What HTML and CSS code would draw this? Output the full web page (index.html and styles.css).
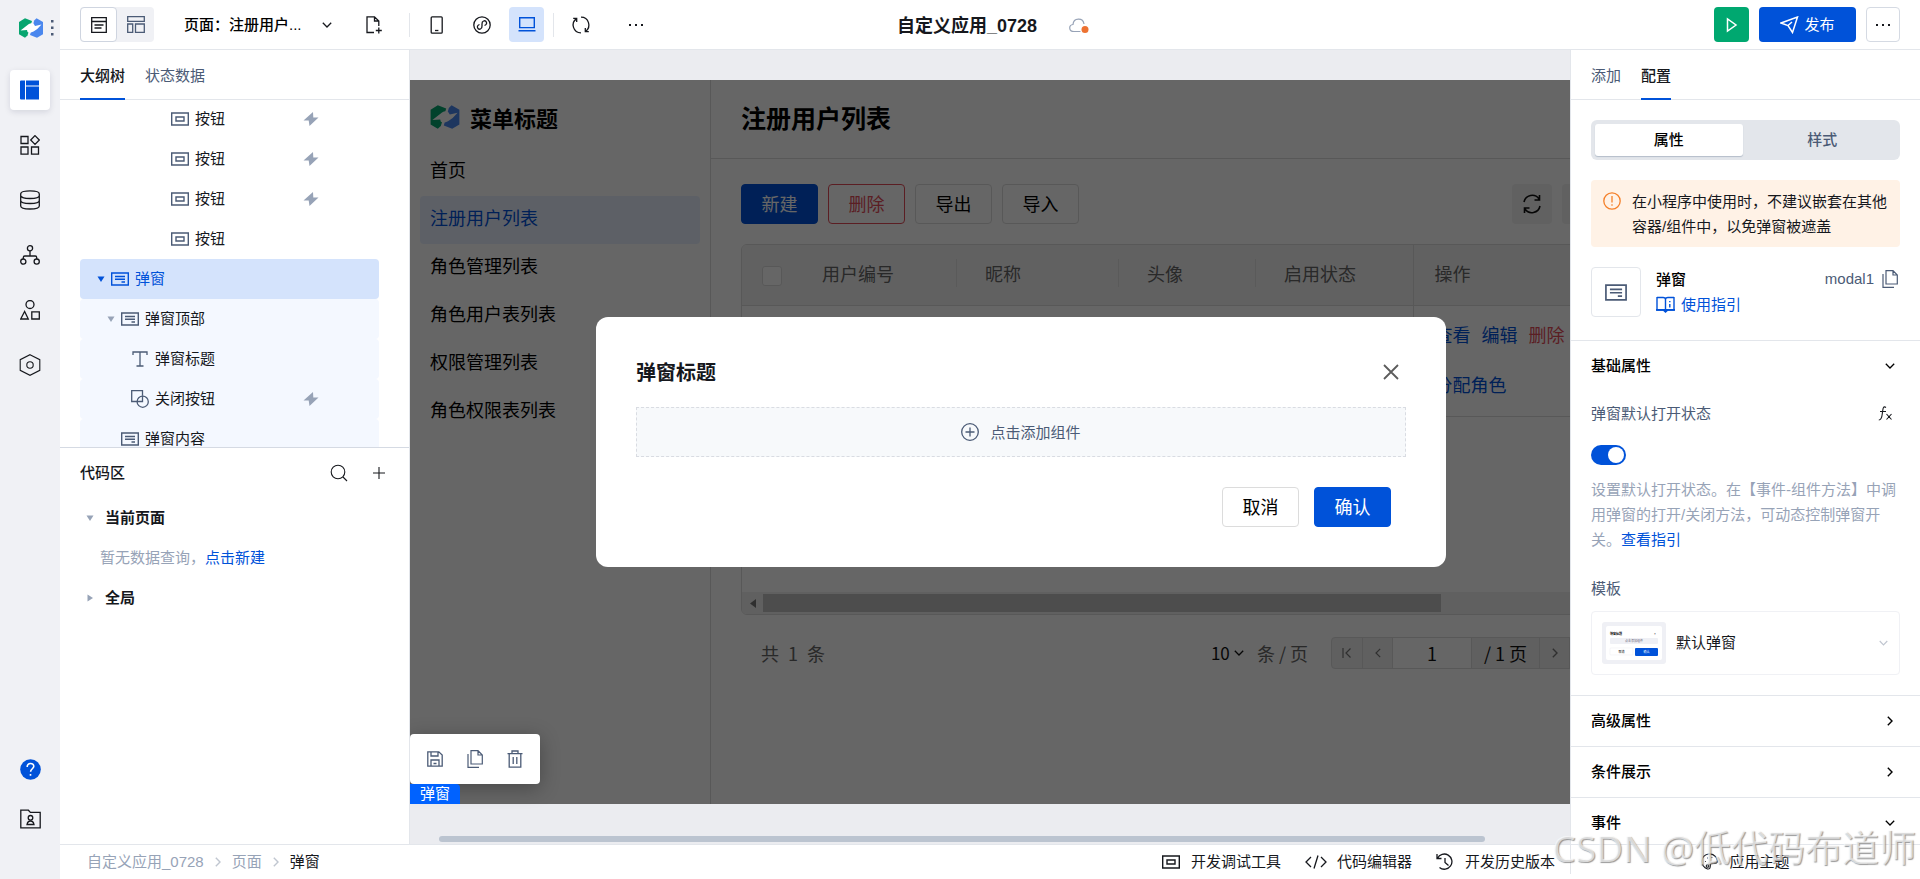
FILE: index.html
```html
<!DOCTYPE html>
<html lang="zh-CN">
<head>
<meta charset="utf-8">
<title>自定义应用_0728</title>
<link rel="stylesheet" href="styles.css">
</head>
<body>
<svg class="sprite" aria-hidden="true">
  <symbol id="logo" viewBox="0 0 24 20"><path fill="#07a56f" d="M0 4 6 .3 13 3 8.500 17.500 6 19.700 0 16.200z"/><path fill="#4a87ee" d="M17.500.3 24 4v12.200L18 19.700 11 17 15.200 2.500z"/><path fill="#fff" d="M1.500 12.500 9.500 6.300Q12 4.600 14.500 5.600L16 8l6.500-1.500Q19 11 14.500 13.500 11 15.500 8.500 14L8 12z"/></symbol>
  <symbol id="btn" viewBox="0 0 18 14"><path fill="none" stroke="currentColor" stroke-width="1.4" d="M.7 1h16.600v12H.7zM5 5h8v4H5z"/></symbol>
  <symbol id="modal" viewBox="0 0 18 14"><path fill="none" stroke="currentColor" stroke-width="1.4" d="M.7 1h16.600v12H.7zM4 4.500h10M4 7.200h10M10.500 10H14"/></symbol>
  <symbol id="bolt" viewBox="0 0 16 14"><path fill="#97a3b7" d="M10 0 .5 8.600h5.200L6.500 14l9-8.600h-5.200z"/></symbol>
  <symbol id="down" viewBox="0 0 10 6"><path fill="none" stroke="currentColor" stroke-width="1.300" d="m.8.8 4.200 4.200L9.200.8"/></symbol>
  <symbol id="right" viewBox="0 0 6 10"><path fill="none" stroke="currentColor" stroke-width="1.400" d="m.8.8 4.200 4.200L.8 9.200"/></symbol>
  <symbol id="left" viewBox="0 0 6 10"><path fill="none" stroke="currentColor" stroke-width="1.200" d="M5.200.8 1 5l4.200 4.200"/></symbol>
  <symbol id="tri-d" viewBox="0 0 8 6"><path fill="currentColor" d="M.5.500h7L4 6z"/></symbol>
  <symbol id="tri-r" viewBox="0 0 6 8"><path fill="currentColor" d="M.5.500v7L6 4z"/></symbol>
  <symbol id="copy" viewBox="0 0 16 18"><path fill="none" stroke="currentColor" stroke-width="1.200" d="M4 .7h7L15.300 5v9H4zM11 .7V5h4.300M1 4v13.300h11"/></symbol>
  <symbol id="dots" viewBox="0 0 16 4"><path fill="currentColor" d="M1 1h2v2H1zM7 1h2v2H7zM13 1h2v2h-2z"/></symbol>
</svg>
<div class="app">
  <nav class="rail" aria-label="主导航">
    <div class="brand"><svg width="24" height="20"><use href="#logo"/></svg><svg class="grip" width="3" height="16" viewBox="0 0 3 16"><path fill="#4b5b76" d="M0 0h2.500v2.500H0zM0 6.500h2.500V9H0zM0 13h2.500v2.500H0z"/></svg></div>
    <button class="rail-btn active" aria-label="页面"><svg width="20" height="20" viewBox="0 0 20 20"><path fill="#0052d9" d="M0 1.500Q0 .5 1 .5h4v19H1q-1 0-1-1zM6 .5h13v5H6zM6 6.500h13v13H6z"/></svg></button>
    <button class="rail-btn" aria-label="组件"><svg width="20" height="20" viewBox="0 0 20 20" class="line"><path d="M1 1.500h7v7H1zM1 12h7v7.200H1zM11.500 12h7v7.200h-7zM15 .6 19.300 5 15 9.400 10.700 5z"/></svg></button>
    <button class="rail-btn" aria-label="数据"><svg width="20" height="20" viewBox="0 0 20 20" class="line"><path d="M.7 4C.7-.1 19.300-.1 19.300 4v12c0 4-18.600 4-18.600 0zM.7 4v1.500c0 4 18.600 4 18.600 0V4M.7 10.500c0 4 18.600 4 18.600 0"/></svg></button>
    <button class="rail-btn" aria-label="流程"><svg width="20" height="20" viewBox="0 0 20 20" class="line"><path d="M10 6v5M3.300 14v-1.500q0-1.500 1.500-1.500h10.400q1.500 0 1.500 1.500V14"/><circle cx="10" cy="3.300" r="2.600"/><circle cx="3.300" cy="16.600" r="2.600"/><circle cx="16.700" cy="16.600" r="2.600"/></svg></button>
    <button class="rail-btn" aria-label="素材"><svg width="20" height="20" viewBox="0 0 20 20" class="line"><circle cx="10" cy="4.500" r="4"/><path d="M4.600 11.500.7 19h7.600zM11.800 11.800h7.500V19h-7.500z"/></svg></button>
    <button class="rail-btn" aria-label="设置"><svg width="22" height="22" viewBox="0 0 22 22" class="line thin"><path d="m11 .7 9.800 5v10.600l-9.800 5-9.800-5V5.700z"/><circle cx="11" cy="11" r="3.200"/></svg></button>
    <div class="rail-foot">
      <button class="rail-btn" aria-label="帮助"><svg width="21" height="21" viewBox="0 0 21 21"><circle cx="10.500" cy="10.500" r="10.300" fill="#0052d9"/><path fill="none" stroke="#fff" stroke-width="1.600" d="M7.200 8c0-4.600 6.600-4.400 6.600-.7 0 2.400-3.200 2.600-3.200 5.500M10.500 15v1.800"/></svg></button>
      <button class="rail-btn" aria-label="资源"><svg width="21" height="20" viewBox="0 0 21 20" class="line"><path d="M.8 18.800V1.200h7.600l2 2.200h9.800v15.400zM7 15.500c.5-2.600 1.500-3.500 3.500-3.500s3 .9 3.500 3.500z"/><circle cx="10.500" cy="8.800" r="2.300"/></svg></button>
    </div>
  </nav>

  <div class="shell">
    <header class="topbar">
      <div class="tools">
        <div class="view-switch">
          <button class="on" aria-label="页面视图"><svg width="16" height="16" viewBox="0 0 16 16" class="line"><path d="M.7.700h14.600v14.600H.7zM.7 4.500h14.600M3.500 8h9M3.500 11h7"/></svg></button>
          <button aria-label="布局视图"><svg width="18" height="17" viewBox="0 0 18 17" class="line muted"><path d="M.7.700h16.600v4.600H.7zM.7 8h5v8.300h-5zM8.500 8h8.800v8.300H8.500z"/></svg></button>
        </div>
        <label class="page-pick"><select aria-label="页面"><option>页面：注册用户...</option></select><svg width="10" height="6"><use href="#down"/></svg></label>
        <button class="icon-btn new-page" aria-label="新建页面"><svg width="16" height="18" viewBox="0 0 16 18" class="line"><path d="M8 16.500H1V.8h7.500L12.800 5v5M8.500.800V5h4.300M12.800 11.500v6M9.800 14.500h6"/></svg></button>
        <i class="sep"></i>
        <button class="icon-btn" aria-label="手机"><svg width="14" height="18" viewBox="0 0 14 18" class="line"><rect x="1.200" y=".8" width="11" height="16.400" rx="1"/><path d="M5 14.500h3.400"/></svg></button>
        <button class="icon-btn" aria-label="小程序"><svg width="18" height="18" viewBox="0 0 18 18" class="line"><circle cx="9" cy="9" r="8.200"/><path d="M6.500 8.500C2.500 10 5 14 7.500 13c2-.8 1.500-2.500 1.500-4s-.4-3.300 1.500-4c2.500-1 5 3 1 4.500"/></svg></button>
        <button class="icon-btn on" aria-label="电脑"><svg width="18" height="15" viewBox="0 0 18 15"><path fill="none" stroke="#0052d9" stroke-width="1.400" d="M1.700.800h14.600v9.800H1.700zM.5 13.700h17"/></svg></button>
        <i class="sep"></i>
        <button class="icon-btn" aria-label="刷新"><svg width="20" height="18" viewBox="0 0 20 18" class="line"><path d="M10 1.200A7.800 7.800 0 0 1 14.500 15.400M10 16.800A7.800 7.800 0 0 1 5.500 2.600M14.300 12v3.700h3.500M5.700 6V2.300H2.200"/></svg></button>
        <button class="icon-btn wide" aria-label="更多"><svg width="16" height="4"><use href="#dots"/></svg></button>
      </div>
      <div class="app-name"><strong>自定义应用_0728</strong><svg width="20" height="16" viewBox="0 0 20 16"><path fill="none" stroke="#97a3b7" stroke-width="1.200" d="M11.500 13.500H5C-.5 13.500-.5 7 4 6.500 4.500-.5 14-.8 15 6"/><circle cx="16" cy="11.500" r="3.500" fill="#ed7232"/></svg></div>
      <div class="actions">
        <button class="run" aria-label="预览"><svg width="12" height="16" viewBox="0 0 12 16"><path fill="none" stroke="#fff" stroke-width="1.500" d="M1.500 2v12l8.500-6z"/></svg></button>
        <button class="publish"><svg width="19" height="18" viewBox="0 0 19 18"><path fill="none" stroke="#fff" stroke-width="1.500" d="M1 7 17.500 1 12.500 16.500 8 9.500zM8 9.500l4-3.500"/></svg>发布</button>
        <button class="more" aria-label="更多操作"><svg width="16" height="4"><use href="#dots"/></svg></button>
      </div>
    </header>

    <div class="columns">
      <aside class="outline">
        <div class="tabs"><button class="on">大纲树</button><button>状态数据</button></div>
        <ul class="tree">
          <li class="lv6"><svg width="18" height="14"><use href="#btn"/></svg><span>按钮</span><svg class="bolt" width="16" height="14"><use href="#bolt"/></svg></li>
          <li class="lv6"><svg width="18" height="14"><use href="#btn"/></svg><span>按钮</span><svg class="bolt" width="16" height="14"><use href="#bolt"/></svg></li>
          <li class="lv6"><svg width="18" height="14"><use href="#btn"/></svg><span>按钮</span><svg class="bolt" width="16" height="14"><use href="#bolt"/></svg></li>
          <li class="lv6"><svg width="18" height="14"><use href="#btn"/></svg><span>按钮</span></li>
          <li class="lv0 selected"><svg class="arrow" width="8" height="6"><use href="#tri-d"/></svg><svg width="18" height="14"><use href="#modal"/></svg><span>弹窗</span></li>
          <li class="lv1 child"><svg class="arrow" width="8" height="6"><use href="#tri-d"/></svg><svg width="18" height="14"><use href="#modal"/></svg><span>弹窗顶部</span></li>
          <li class="lv2 child"><svg width="18" height="18" viewBox="0 0 18 18" class="line muted"><path d="M2 5V2h14v3M9 2v14M5.500 16h7"/></svg><span>弹窗标题</span></li>
          <li class="lv2 child"><svg width="18" height="18" viewBox="0 0 18 18" class="line muted"><path d="M6.500 11.500H.7V.700h10.800v5"/><circle cx="11.700" cy="11.700" r="5.600"/><path d="M11.500 5.700v5.800H6"/></svg><span>关闭按钮</span><svg class="bolt" width="16" height="14"><use href="#bolt"/></svg></li>
          <li class="lv1n child"><svg width="18" height="14"><use href="#modal"/></svg><span>弹窗内容</span></li>
        </ul>
        <section class="code">
          <header><h2>代码区</h2><button aria-label="搜索"><svg width="18" height="18" viewBox="0 0 18 18" class="line thin"><circle cx="8" cy="8" r="6.800"/><path d="m13 13 4 4"/></svg></button><button aria-label="添加"><svg width="12" height="12" viewBox="0 0 12 12" class="line thin"><path d="M6 0v12M0 6h12"/></svg></button></header>
          <div class="group"><svg width="8" height="6"><use href="#tri-d"/></svg><b>当前页面</b></div>
          <p>暂无数据查询，<a href="#">点击新建</a></p>
          <div class="group"><svg width="8" height="8"><use href="#tri-r"/></svg><b>全局</b></div>
        </section>
      </aside>

      <main class="canvas">
        <div class="page">
          <div class="site-menu">
            <h2><svg width="30" height="24"><use href="#logo"/></svg>菜单标题</h2>
            <ul><li>首页</li><li class="on">注册用户列表</li><li>角色管理列表</li><li>角色用户表列表</li><li>权限管理列表</li><li>角色权限表列表</li></ul>
          </div>
          <div class="site-main">
            <h1>注册用户列表</h1>
            <div class="bar">
              <button class="primary">新建</button><button class="danger">删除</button><button>导出</button><button>导入</button>
              <button class="square push" aria-label="刷新列表"><svg width="20" height="20" viewBox="0 0 20 20"><path fill="none" stroke="#111" stroke-width="1.600" d="M2 8A8.300 8.300 0 0 1 17 5M17.500 1v5h-5M18 12A8.300 8.300 0 0 1 3 15M2.500 19v-5h5"/></svg></button><button class="square" aria-label="列设置"></button>
            </div>
            <div class="grid">
              <table>
                <colgroup><col class="c0"><col class="c1"><col class="c2"><col class="c3"><col class="c4"><col></colgroup>
                <thead><tr><th class="pick"><input type="checkbox" aria-label="全选"></th><th><span>用户编号</span></th><th><span>昵称</span></th><th><span>头像</span></th><th><span>启用状态</span></th><th class="fixed">操作</th></tr></thead>
                <tbody><tr><td></td><td></td><td></td><td></td><td></td><td class="fixed"><div class="ops"><a href="#">查看</a><a href="#">编辑</a><a href="#" class="del">删除</a><a href="#">分配角色</a></div></td></tr></tbody>
              </table>
              <div class="hscroll"><svg width="6" height="9" viewBox="0 0 6 9"><path fill="#777" d="M6 0v9L0 4.500z"/></svg><i></i></div>
            </div>
            <div class="pager">
              <span class="total"><span>共</span><span>1</span><span>条</span></span>
              <label class="size"><select aria-label="每页条数"><option>10</option></select><svg width="10" height="6"><use href="#down"/></svg></label><span class="unit">条 / 页</span>
              <div class="pages"><button aria-label="首页"><svg width="10" height="12" viewBox="0 0 10 12"><path fill="none" stroke="#777" stroke-width="1.200" d="M1 1v10M8.500 1.500 4 6l4.500 4.500"/></svg></button><button aria-label="上一页"><svg width="6" height="10"><use href="#left"/></svg></button><input value="1" aria-label="页码"><span>/ 1 页</span><button aria-label="下一页"><svg width="6" height="10"><use href="#right"/></svg></button><button aria-label="末页"></button></div>
            </div>
          </div>
          <div class="mask">
            <div class="dialog" role="dialog" aria-label="弹窗标题">
              <div class="dialog-head"><h3>弹窗标题</h3><button aria-label="关闭"><svg width="16" height="16" viewBox="0 0 16 16"><path fill="none" stroke="#5c5c5c" stroke-width="1.800" d="m1 1 14 14M15 1 1 15"/></svg></button></div>
              <button class="slot"><svg width="18" height="18" viewBox="0 0 18 18" class="line muted"><circle cx="9" cy="9" r="8.300"/><path d="M9 4.500v9M4.500 9h9"/></svg>点击添加组件</button>
              <div class="dialog-foot"><button>取消</button><button class="primary">确认</button></div>
            </div>
          </div>
        </div>
        <div class="float">
          <div class="float-tools">
            <button aria-label="保存"><svg width="16" height="16" viewBox="0 0 16 16" class="line muted"><path d="M.8.800h11L15.200 4v11.200H.8zM4 1v4h7V1M4 15V9h8v6M6.500 12.500h3"/></svg></button>
            <button aria-label="复制"><svg width="16" height="18" class="slate"><use href="#copy"/></svg></button>
            <button aria-label="删除"><svg width="16" height="18" viewBox="0 0 16 18" class="line muted"><path d="M.5 3.700h15M5 3.500V1h6v2.500M2.200 4v13.200h11.600V4M6.200 7v7M9.800 7v7"/></svg></button>
          </div>
          <span class="tag">弹窗</span>
        </div>
        <i class="track"></i>
      </main>

      <aside class="config">
        <div class="tabs"><button>添加</button><button class="on">配置</button></div>
        <div class="config-body">
          <div class="intro">
            <div class="segment"><button class="on">属性</button><button>样式</button></div>
            <div class="alert"><svg width="18" height="18" viewBox="0 0 18 18"><g fill="none" stroke="#f5802a" stroke-width="1.300"><circle cx="9" cy="9" r="8.200"/><path d="M9 4v6.500M9 12.200v1.600"/></g></svg><p>在小程序中使用时，不建议嵌套在其他容器/组件中，以免弹窗被遮盖</p></div>
            <div class="component">
              <div class="thumb-icon"><svg width="22" height="17"><use href="#modal"/></svg></div>
              <div class="who"><b>弹窗</b><a href="#"><svg width="19" height="17" viewBox="0 0 19 17"><path fill="none" stroke="#0052d9" stroke-width="1.400" d="M1 1.500h6q2.500 0 2.500 2v11M18 1.500h-6q-2.500 0-2.500 2M1 1v13h17V1M13.800 5v1.200M13.800 8v3.500"/><path fill="#0052d9" d="M0 13h19v1.800h-7L9.500 17 7 14.800H0z"/></svg>使用指引</a></div>
              <div class="ident">modal1<svg width="16" height="18"><use href="#copy"/></svg></div>
            </div>
          </div>
          <section class="props">
            <button class="fold">基础属性<svg width="10" height="6"><use href="#down"/></svg></button>
            <div class="field"><label for="open">弹窗默认打开状态</label><svg width="15" height="16" viewBox="0 0 15 16" class="line thin"><path d="M8 1.500C5-.5 5 3 4.500 6 4 10 4 14 .8 14M2 5.500h6M8.500 8l5 5.500M13.500 8l-5 5.500"/></svg></div>
            <input type="checkbox" role="switch" id="open" class="switch" checked>
            <p class="hint">设置默认打开状态。在【事件-组件方法】中调用弹窗的打开/关闭方法，可动态控制弹窗开关。<a href="#">查看指引</a></p>
            <label for="tpl" class="tpl-label">模板</label>
            <div class="tpl">
              <svg width="64" height="42" viewBox="0 0 64 42" aria-hidden="true"><rect width="64" height="42" rx="3" fill="#eff0f5"/><rect x="4" y="4" width="56" height="34" rx="2" fill="#fff"/><rect x="8" y="16" width="48" height="6" rx="1" fill="#eff0f5"/><rect x="8" y="26" width="23" height="7" rx="1" fill="#fff" stroke="#f0f0f4" stroke-width=".6"/><rect x="33" y="26" width="23" height="8" rx="1" fill="#0052d9"/><g font-size="3"><text x="8" y="12.500" font-weight="700">弹窗标题</text><text x="52" y="12.500">×</text><text x="23" y="20" fill="#667">点击添加组件</text><text x="16.500" y="31">取消</text><text x="41.500" y="31" fill="#fff">确认</text></g></svg>
              <select id="tpl"><option>默认弹窗</option></select><svg class="caret" width="9" height="6"><use href="#down"/></svg>
            </div>
          </section>
          <button class="fold line-top">高级属性<svg width="10" height="10"><use href="#right"/></svg></button>
          <button class="fold line-top">条件展示<svg width="10" height="10"><use href="#right"/></svg></button>
          <button class="fold line-top">事件<svg width="10" height="6"><use href="#down"/></svg></button>
        </div>
      </aside>
    </div>

    <footer class="status">
      <nav class="crumbs" aria-label="路径"><a href="#">自定义应用_0728</a><svg width="6" height="10"><use href="#right"/></svg><a href="#">页面</a><svg width="6" height="10"><use href="#right"/></svg><span>弹窗</span></nav>
      <button><svg width="18" height="14"><use href="#btn"/></svg>开发调试工具</button>
      <button class="editor"><svg width="22" height="14" viewBox="0 0 22 14" class="line"><path d="M6 2 1 7l5 5M16 2l5 5-5 5M13 .5 9 13.500"/></svg>代码编辑器</button>
      <button><svg width="18" height="18" viewBox="0 0 18 18" class="line"><path d="M1 1v4.500h4.500M1.500 5.300A7.600 7.600 0 1 1 3.500 14.500M9 5v4.500l3.500 3"/></svg>开发历史版本</button>
      <div class="theme"><button><svg width="17" height="17" viewBox="0 0 17 17" class="line thin"><path d="M6.500 16C-1 13.500-1 2.500 7.500 1c6-.8 10 5 8.500 8.500-1.200 2.200-4.500-.8-6 .8S10.500 16.500 6.500 16z"/><circle cx="6.500" cy="13" r="1.300"/><path d="M4 8.500h.8M6 5h.8M10.500 4.500h.8"/></svg>应用主题</button></div>
    </footer>
  </div>
  <div class="watermark">CSDN @低代码布道师</div>
</div>
</body>
</html>
```
FILE: styles.css
```css
* { box-sizing: border-box; }
body { margin: 0; font: 15px/20px "Liberation Sans", "Noto Sans CJK SC", sans-serif; color: #16181d; background: #fff; }
button, input, select { font: inherit; color: inherit; margin: 0; }
button { border: 0; background: none; padding: 0; display: flex; align-items: center; justify-content: center; }
select { appearance: none; border: 0; background: none; padding: 0; }
a { color: #0052d9; text-decoration: none; }
ul { list-style: none; margin: 0; padding: 0; }
h1, h2, h3, p { margin: 0; }
svg { flex: none; display: block; }
.sprite { position: absolute; width: 0; height: 0; }
.line { fill: none; stroke: #16181d; stroke-width: 1.3; }
.thin { stroke-width: 1.1; }
.muted { stroke: #4b5b76; }
.slate { color: #4b5b76; }

.app { display: flex; height: 100vh; position: relative; overflow: hidden; }

.rail { flex: none; width: 60px; background: #f0f1f5; display: flex; flex-direction: column; align-items: center; gap: 15px; padding-bottom: 40px; }
.brand { height: 55px; width: 100%; display: flex; align-items: center; gap: 8px; padding-left: 19px; }
.rail-btn { width: 40px; height: 40px; border-radius: 4px; }
.rail-btn.active { background: #fff; box-shadow: 0 2px 6px rgba(0, 20, 60, .12); }
.rail-foot { margin-top: auto; display: flex; flex-direction: column; gap: 10px; }

.shell { flex: 1; min-width: 0; display: flex; flex-direction: column; }
.topbar { flex: none; height: 50px; border-bottom: 1px solid #e3e6eb; display: grid; grid-template-columns: 1fr auto 1fr; align-items: center; padding: 0 20px; }
.tools { display: flex; align-items: center; }
.view-switch { display: flex; background: #f0f1f5; border-radius: 4px; }
.view-switch button { width: 37px; height: 35px; border-radius: 4px; }
.view-switch .on { background: #fff; border: 1px solid #cfd5e0; }
.page-pick { display: flex; align-items: center; gap: 18px; margin: 0 19px 0 30px; font-weight: 500; }
.page-pick select { width: 120px; color: #000; }
.icon-btn { width: 35px; height: 35px; border-radius: 4px; margin: 0 5px; }
.icon-btn.wide { margin-left: 15px; }
.icon-btn.on { background: #d4e3fc; }
.icon-btn.new-page { margin-right: 14px; }
.sep { width: 1px; height: 24px; background: #e3e6eb; margin: 0 4px; }
.app-name { display: flex; align-items: center; gap: 32px; font-size: 18px; padding: 2px 0 0 6px; }
.actions { display: flex; justify-content: flex-end; gap: 10px; }
.actions button { height: 35px; border-radius: 4px; }
.run { width: 35px; background: #00a870; }
.publish { width: 97px; background: #0052d9; color: #fff; gap: 5px; }
.more { width: 34px; border: 1px solid #d5dae3; }

.columns { flex: 1; min-height: 0; display: flex; }
.tabs { flex: none; height: 50px; border-bottom: 1px solid #e3e6eb; display: flex; gap: 20px; padding: 0 20px; }
.tabs button { color: #4b5b76; height: 50px; padding-top: 4px; border-bottom: 2px solid transparent; }
.tabs .on { color: #16181d; font-weight: 500; border-color: #0052d9; }

.outline { flex: none; width: 350px; border-right: 1px solid #e3e6eb; display: flex; flex-direction: column; }
.outline .tabs { margin-bottom: -1px; }
.tree { flex: 1; min-height: 0; overflow: hidden; padding: 0 30px 0 20px; }
.tree li { height: 40px; border-radius: 4px; display: flex; align-items: center; gap: 6px; padding: 0 60px 0 31px; }
.tree svg { color: #4b5b76; }
.tree .lv0 { padding-left: 17px; }
.tree .lv1 { padding-left: 27px; }
.tree .lv1n { padding-left: 41px; }
.tree .lv2 { padding-left: 51px; }
.tree .lv6 { padding-left: 91px; }
.tree .arrow { color: #97a3b7; }
.tree .selected, .tree .selected svg { color: #0052d9; }
.tree .selected { background: #d4e3fc; }
.tree .child { background: #f4f8ff; }
.tree .bolt { margin-left: auto; }
.code { flex: none; height: 397px; border-top: 1px solid #d5dae3; }
.code header { height: 50px; display: flex; align-items: center; gap: 20px; padding: 0 20px; }
.code h2 { font-size: 15px; font-weight: 500; flex: 1; }
.code header button { width: 20px; height: 20px; }
.group { height: 40px; display: flex; align-items: center; gap: 11px; padding-left: 26px; }
.group svg { color: #97a3b7; }
.code p { line-height: 40px; padding-left: 40px; color: #97a3b7; }

.canvas { flex: 1; min-width: 0; background: #ebecf0; position: relative; overflow: hidden; padding-top: 30px; }
.page { min-width: 1222px; height: 724px; background: #fff; display: flex; position: relative; font-size: 18px; line-height: 24px; font-family: "Noto Sans CJK SC", sans-serif; color: #000; }
.site-menu { flex: none; width: 301px; border-right: 1px solid #dcdcdc; padding: 0 10px; }
.site-menu h2 { display: flex; align-items: center; gap: 10px; height: 68px; padding: 6px 10px 0; font-size: 22px; }
.site-menu li { height: 48px; line-height: 42px; padding: 0 10px; border-radius: 4px; }
.site-menu .on { background: #e8f1ff; color: #0052d9; }
.site-main { flex: 1; min-width: 0; }
.site-main h1 { font-size: 25px; line-height: 32px; padding: 21px 30px 25px; border-bottom: 1px solid #dcdcdc; }
.bar { display: flex; gap: 10px; padding: 25px 30px 20px; }
.bar button, .dialog-foot button { width: 77px; height: 40px; border: 1px solid #dcdcdc; border-radius: 4px; padding-bottom: 2px; }
.bar .danger { border-color: #e34d59; color: #e34d59; }
.bar .primary, .dialog-foot .primary { background: #0052d9; border-color: #0052d9; color: #fff; }
.bar .square { width: 40px; background: #f3f3f3; border: 0; padding: 0; }
.bar .push { margin-left: auto; }
.grid { margin: 0 30px; height: 371px; border: 1px solid #dcdcdc; border-radius: 6px; overflow: hidden; display: flex; flex-direction: column; }
table { width: 100%; border-collapse: collapse; table-layout: fixed; }
.c0 { width: 52px; } .c1 { width: 163px; } .c2 { width: 162px; } .c3 { width: 137px; } .c4 { width: 157px; }
th { height: 60px; background: #f3f3f3; font-weight: 400; text-align: left; color: #666; padding: 0 0 3px; border-bottom: 1px solid #dcdcdc; }
th span { display: block; line-height: 28px; padding-left: 28px; border-right: 1px solid #e0e0e0; }
th:nth-child(5) span { border: 0; }
.pick { padding: 3px 0 0 20px; }
.pick input { appearance: none; display: block; width: 20px; height: 20px; border: 1px solid #dcdcdc; border-radius: 3px; background: #fff; }
.fixed { padding-left: 21px; border-left: 1px solid #dcdcdc; }
td { height: 111px; padding: 0 0 3px; border-bottom: 1px solid #dcdcdc; }
.ops { display: flex; flex-wrap: wrap; gap: 26px 11px; width: 150px; }
.ops .del { color: #e34d59; }
.hscroll { margin-top: auto; height: 22px; background: #f0f0f0; display: flex; align-items: center; gap: 7px; padding-left: 8px; }
.hscroll i { width: 678px; height: 18px; background: #c1c1c1; }
.pager { display: flex; align-items: center; padding: 22px 32px 0 50px; color: #666; }
.total { margin-right: auto; display: flex; gap: 9px; }
.size { display: flex; align-items: center; gap: 4px; color: #111; font-size: 17px; }
.unit { margin: 0 23px 0 13px; }
.pages { display: flex; height: 32px; border: 1px solid #dcdcdc; border-radius: 4px; background: #f0f0f0; }
.pages button { width: 30px; color: #777; }
.pages button + button, .pages span + button { border-left: 1px solid #dcdcdc; }
.pages input { width: 80px; border: 0; background: #fff; text-align: center; color: #111; border-left: 1px solid #dcdcdc; border-right: 1px solid #dcdcdc; }
.pages span { width: 67px; text-align: center; line-height: 30px; color: #111; }
.mask { position: absolute; inset: 0; background: rgba(0, 0, 0, .6); display: flex; align-items: center; justify-content: center; }
.dialog { width: 850px; padding: 30px 40px 40px; background: #fff; border-radius: 12px; }
.dialog-head { display: flex; align-items: center; justify-content: space-between; height: 50px; margin-bottom: 10px; padding-right: 7px; }
.dialog h3 { font-size: 20px; color: #16181d; }
.slot { width: 100%; height: 50px; background: #f7f9fb; border: 1px dashed #d9dce2; color: #4b5b76; font-size: 15px; gap: 11px; }
.dialog-foot { display: flex; justify-content: flex-end; gap: 15px; padding: 30px 15px 0 0; }
.float { position: absolute; left: 0; top: 684px; display: flex; flex-direction: column; align-items: flex-start; }
.float-tools { width: 130px; height: 50px; background: #fff; border-radius: 4px; display: flex; padding: 0 5px; box-shadow: 0 4px 20px rgba(0, 0, 0, .3); position: relative; }
.float-tools button { width: 40px; }
.tag { background: #0062ff; color: #fff; padding: 0 10px; border-radius: 0 4px 0 0; z-index: 1; }
.track { position: absolute; left: 29px; right: 85px; bottom: 2px; height: 6px; border-radius: 3px; background: #bbc4d0; }

.config { flex: none; width: 350px; border-left: 1px solid #e3e6eb; display: flex; flex-direction: column; }
.config-body { flex: 1; min-height: 0; overflow: hidden; }
.intro { padding: 20px 20px 23px; border-bottom: 1px solid #e3e6eb; }
.segment { display: flex; gap: 6px; height: 40px; padding: 4px; background: #e3e6eb; border-radius: 6px; }
.segment button { flex: 1; color: #4b5b76; border-radius: 3px; font-weight: 500; }
.segment .on { background: #fff; color: #000; box-shadow: 0 1px 1px #b4bdca; }
.alert { margin: 20px 0; padding: 9px 12px 8px; background: #fff2e6; border-radius: 4px; display: flex; gap: 11px; line-height: 25px; }
.alert svg { margin-top: 3px; }
.alert p { flex: 1; }
.component { display: flex; }
.thumb-icon { width: 50px; height: 50px; border: 1px solid #e3e6eb; border-radius: 4px; color: #4b5b76; display: flex; align-items: center; justify-content: center; margin-right: 15px; }
.who { flex: 1; line-height: 25px; }
.who b { display: block; font-weight: 500; color: #000; }
.who a { display: flex; align-items: center; gap: 6px; }
.ident { display: flex; align-items: center; gap: 8px; height: 24px; color: #4b5b76; padding-right: 2px; }
.fold { width: 100%; height: 50px; padding: 0 25px 0 20px; justify-content: space-between; font-weight: 500; color: #000; }
.line-top { border-top: 1px solid #e3e6eb; height: 51px; }
.props { padding: 0 20px 20px; }
.props .fold { padding: 0 5px 0 0; }
.field { display: flex; justify-content: space-between; align-items: center; height: 45px; padding-right: 7px; color: #4b5b76; }
.switch { appearance: none; width: 35px; height: 20px; border-radius: 10px; margin: 9px 0 12px; background: #0052d9; display: flex; justify-content: flex-end; align-items: center; padding: 2px; }
.switch::before { content: ""; width: 16px; height: 16px; border-radius: 50%; background: #fff; }
.hint { line-height: 25px; color: #97a3b7; }
.tpl-label { display: block; margin: 27px 0 12px; color: #4b5b76; }
.tpl { display: flex; align-items: center; gap: 10px; height: 64px; border: 1px solid #f0f1f5; border-radius: 4px; padding: 0 11px 0 10px; }
.tpl select { flex: 1; }
.caret { color: #c0c6d0; }

.status { flex: none; height: 35px; border-top: 1px solid #e3e6eb; display: flex; align-items: center; gap: 24px; }
.crumbs { flex: 1; display: flex; align-items: center; gap: 11px; padding-left: 27px; color: #c0c6d0; }
.crumbs a { color: #97a3b7; }
.crumbs span { color: #16181d; }
.status button { gap: 11px; }
.status .editor { gap: 10px; }
.theme { width: 350px; margin-left: -9px; display: flex; justify-content: center; border-left: 1px solid #e3e6eb; height: 29px; padding-top: 4px; align-self: flex-start; }
.watermark { position: absolute; right: 4px; bottom: 4px; font: 37px/54px "Noto Sans", "Noto Sans CJK SC", sans-serif; color: rgba(255, 255, 255, .65); text-shadow: 1px 1px 1px rgba(110, 110, 110, .7); pointer-events: none; }
```
